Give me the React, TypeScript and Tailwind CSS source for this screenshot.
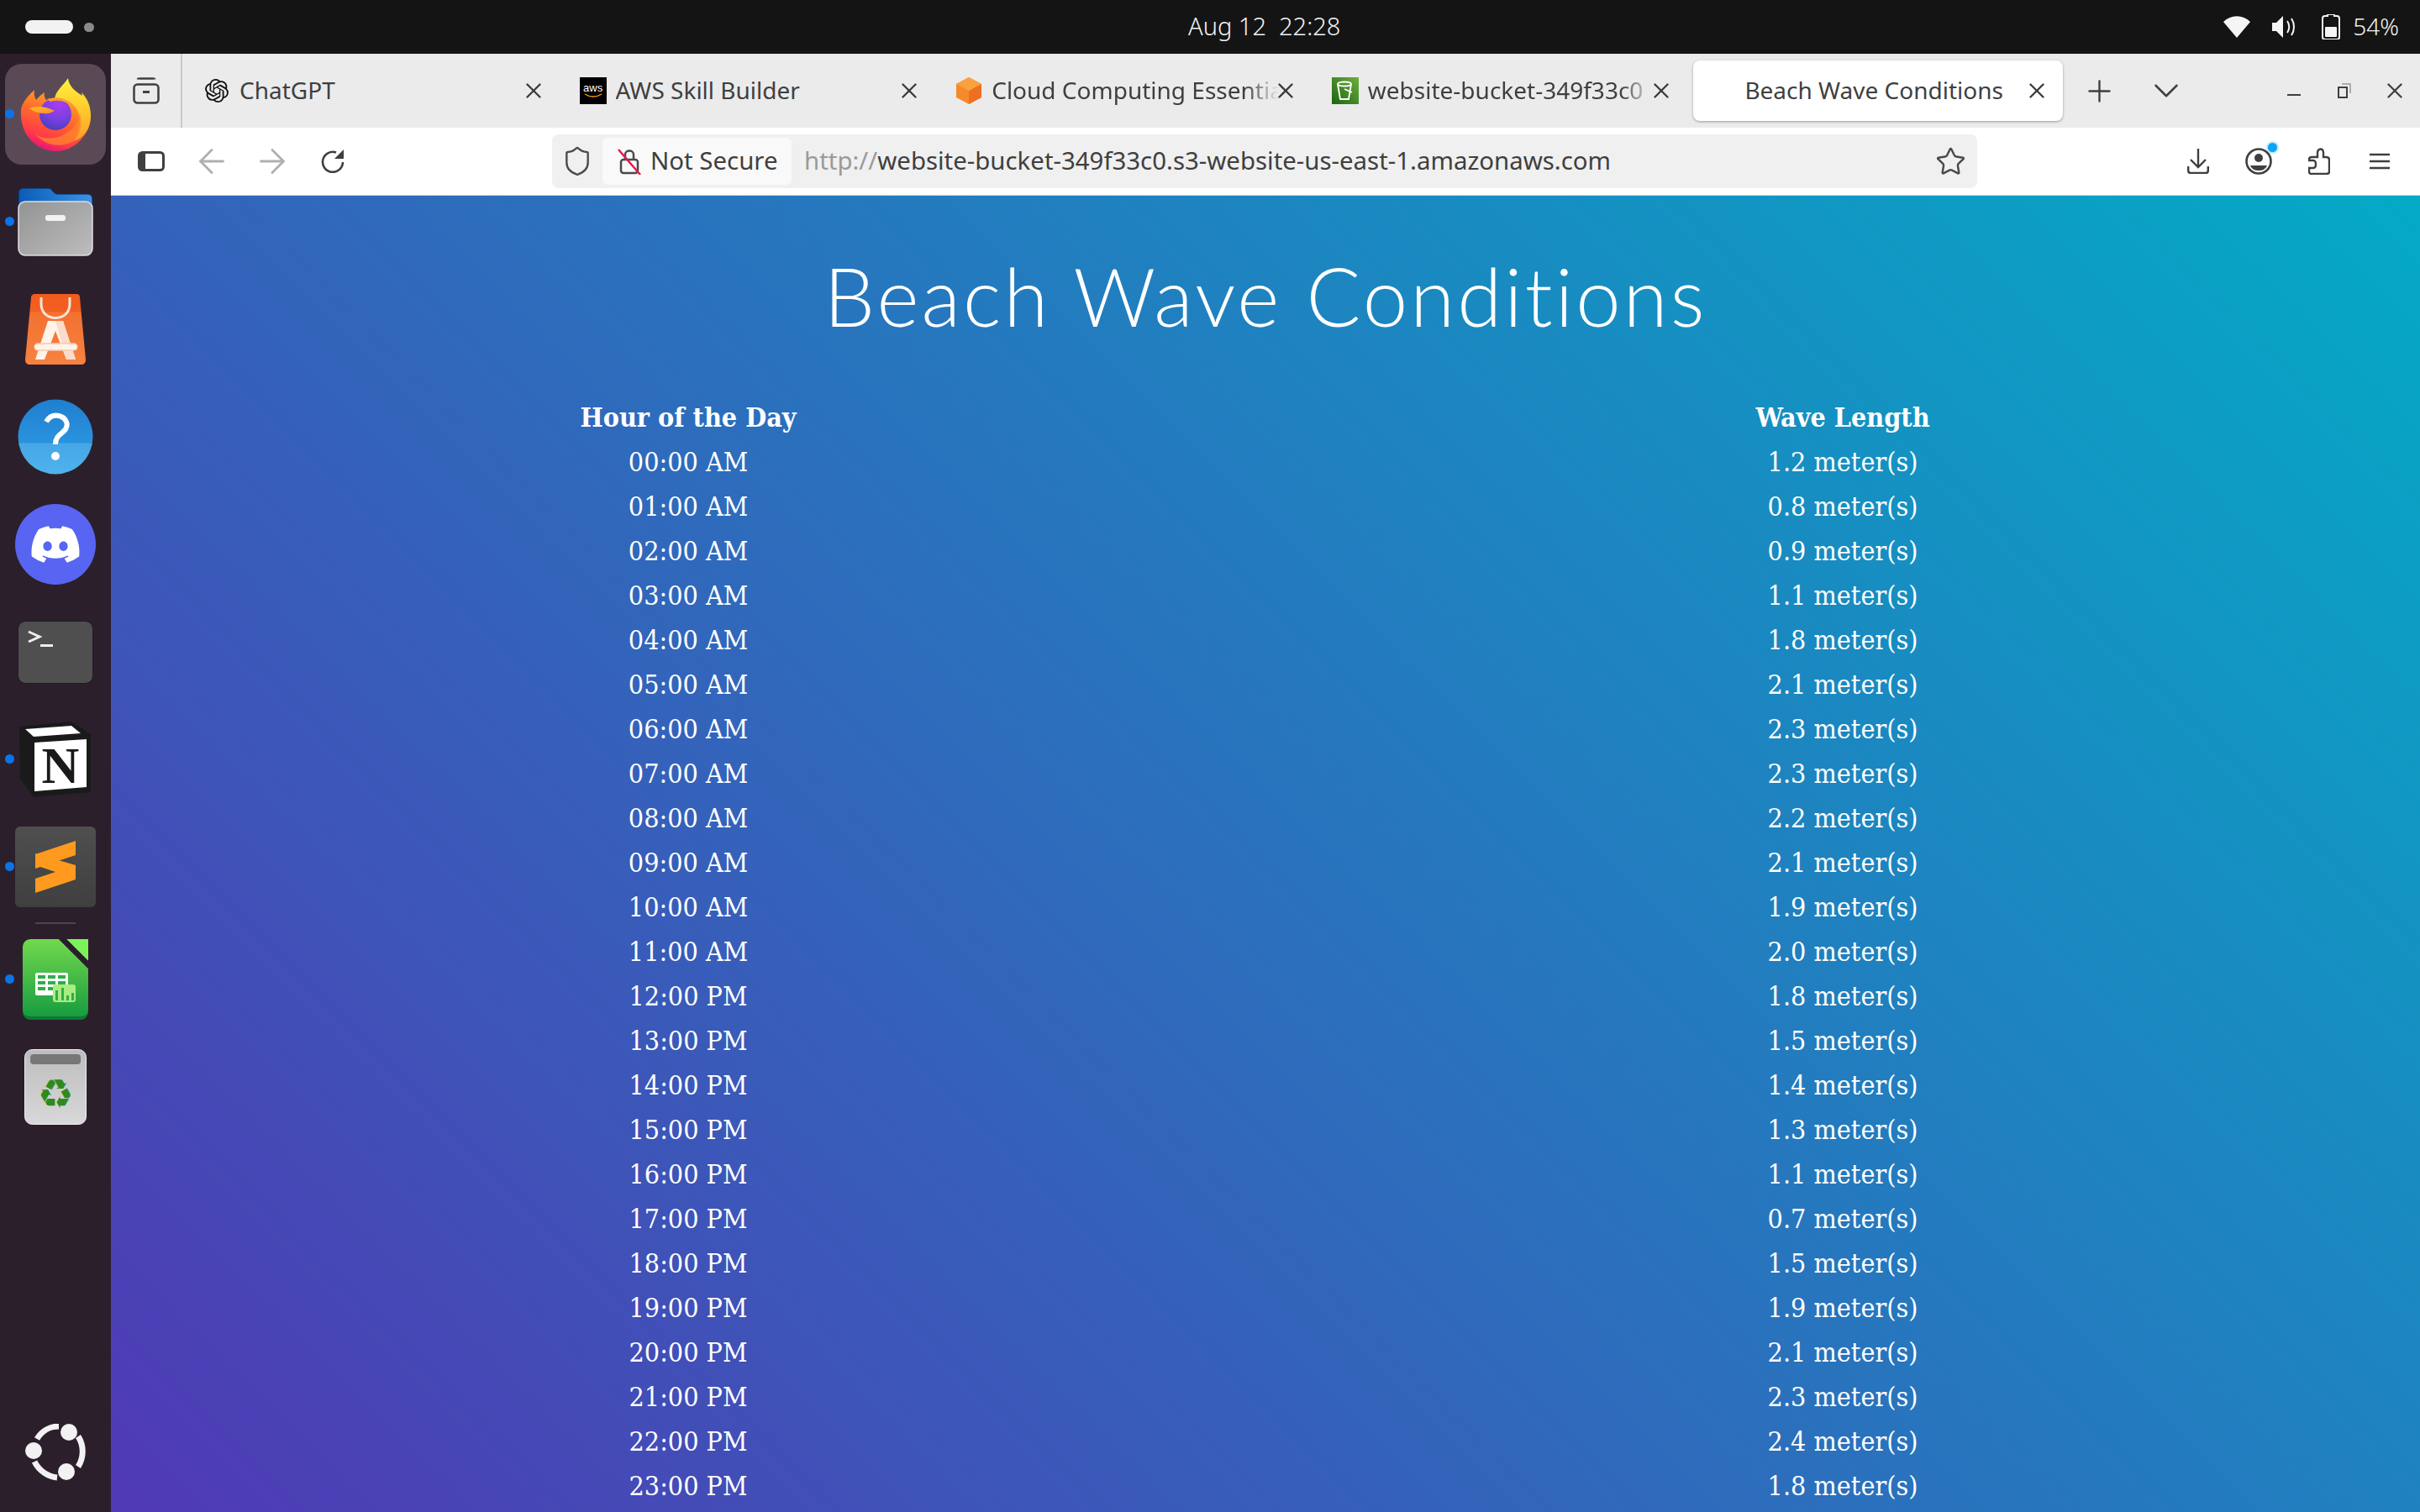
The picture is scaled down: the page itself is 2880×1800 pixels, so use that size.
import React from "react";
import { ArrowLeft, ArrowRight, Shield, Star, Plus, ChevronDown, X } from "lucide-react";
import { SiOpenai } from "react-icons/si";
import { FaDiscord } from "react-icons/fa";

const rows = [
  ["00:00 AM", "1.2"], ["01:00 AM", "0.8"], ["02:00 AM", "0.9"], ["03:00 AM", "1.1"],
  ["04:00 AM", "1.8"], ["05:00 AM", "2.1"], ["06:00 AM", "2.3"], ["07:00 AM", "2.3"],
  ["08:00 AM", "2.2"], ["09:00 AM", "2.1"], ["10:00 AM", "1.9"], ["11:00 AM", "2.0"],
  ["12:00 PM", "1.8"], ["13:00 PM", "1.5"], ["14:00 PM", "1.4"], ["15:00 PM", "1.3"],
  ["16:00 PM", "1.1"], ["17:00 PM", "0.7"], ["18:00 PM", "1.5"], ["19:00 PM", "1.9"],
  ["20:00 PM", "2.1"], ["21:00 PM", "2.3"], ["22:00 PM", "2.4"], ["23:00 PM", "1.8"],
];

function Firefox() {
  return (
    <svg width="84" height="87" viewBox="0 0 84 87">
      <defs>
        <linearGradient id="ffBody" x1="0.75" y1="0.05" x2="0.35" y2="1">
          <stop offset="0" stopColor="#ffb32b" />
          <stop offset="0.45" stopColor="#ff6a2a" />
          <stop offset="0.8" stopColor="#ff3a4a" />
          <stop offset="1" stopColor="#e3127a" />
        </linearGradient>
        <linearGradient id="ffFlame" x1="0.5" y1="0" x2="0.5" y2="1">
          <stop offset="0" stopColor="#fff03c" />
          <stop offset="0.6" stopColor="#ffc22c" />
          <stop offset="1" stopColor="#ff9a2a" />
        </linearGradient>
        <radialGradient id="ffGlobe" cx="0.6" cy="0.15" r="0.95">
          <stop offset="0" stopColor="#a83ef0" />
          <stop offset="0.55" stopColor="#7a3fe0" />
          <stop offset="1" stopColor="#3e3fb4" />
        </radialGradient>
        <linearGradient id="ffFox" x1="0" y1="0" x2="1" y2="1">
          <stop offset="0" stopColor="#ffbe2e" />
          <stop offset="1" stopColor="#ff8a28" />
        </linearGradient>
      </defs>
      <path d="M1 38C2 30 8 22 17 14C16 18 17 22 19 26C22 22 26 19 29 17C28 20 29 23 31 26C45 22 70 24 84 42C84 68 65 87 42 87C18 87 -1 66 1 38Z" fill="url(#ffBody)" />
      <path d="M41 24C43 14 51 9 57 0C58 10 66 16 74 21L73 17C80 24 84 33 84 45C84 60 77 70 64 75C72 62 74 46 66 35C60 27 50 23 41 24Z" fill="url(#ffFlame)" />
      <path d="M64 75C48 84 28 80 18 66C26 74 46 74 60 62C70 54 72 44 70 38C74 50 74 66 64 75Z" fill="#ff8a2a" opacity="0.7" />
      <circle cx="42" cy="43" r="19" fill="url(#ffGlobe)" />
      <path d="M11 36C18 33 30 33 41 39C37 41 33 43 29 42C22 42 16 40 11 36Z" fill="url(#ffFox)" />
      <path d="M32 25C44 21 58 25 64 35C56 28 46 25 36 28Z" fill="#ff9d2c" />
    </svg>
  );
}

function Folder() {
  return (
    <svg width="90" height="82" viewBox="0 0 90 82">
      <defs>
        <linearGradient id="fdBlue" x1="0" y1="0" x2="1" y2="0">
          <stop offset="0" stopColor="#0a5cb4" />
          <stop offset="1" stopColor="#3c93e6" />
        </linearGradient>
        <linearGradient id="fdGray" x1="0" y1="0" x2="1" y2="1">
          <stop offset="0" stopColor="#939393" />
          <stop offset="1" stopColor="#bdbdbd" />
        </linearGradient>
      </defs>
      <path d="M1 30V8C1 3 3 1 7 1H36C39 1 40 2 42 5C44 7 45 8 48 8H82C87 8 89 10 89 15V40H1Z" fill="url(#fdBlue)" stroke="#0b2a55" strokeWidth="1" />
      <rect x="1" y="17" width="88" height="64" rx="8" fill="url(#fdGray)" stroke="#dedede" strokeWidth="1.5" />
      <rect x="33" y="33" width="24" height="7" rx="3" fill="#f2f2f2" />
    </svg>
  );
}

function Store() {
  return (
    <svg width="72" height="84" viewBox="0 0 72 84">
      <defs>
        <linearGradient id="stBg" x1="0" y1="0" x2="0" y2="1">
          <stop offset="0" stopColor="#f25b1e" />
          <stop offset="0.25" stopColor="#f25f22" />
          <stop offset="0.26" stopColor="#f4702f" />
          <stop offset="1" stopColor="#f58341" />
        </linearGradient>
      </defs>
      <path d="M7 4C7 2 9 0 11 0H61C64 0 65 2 65 4L72 78C72 82 70 84 66 84H6C2 84 0 82 0 78Z" fill="url(#stBg)" />
      <path d="M19 4V12C19 34 53 34 53 12V4" fill="none" stroke="#f8e3d6" strokeWidth="3" />
      <path d="M27 32H45L60 78H49L36 44L23 78H12Z" fill="#fff3ea" />
      <path d="M36 32H45L60 78H49Z" fill="#fbdccb" />
      <rect x="11" y="59" width="51" height="8" rx="4" fill="#fff3ea" stroke="#f9c7ae" strokeWidth="1.5" />
    </svg>
  );
}

function Help() {
  return (
    <svg width="90" height="90" viewBox="0 0 90 90">
      <defs>
        <linearGradient id="hp" x1="0" y1="0" x2="0" y2="1">
          <stop offset="0" stopColor="#1f7fd0" />
          <stop offset="0.58" stopColor="#2a93de" />
          <stop offset="0.59" stopColor="#45a7e6" />
          <stop offset="1" stopColor="#4fb3ec" />
        </linearGradient>
      </defs>
      <circle cx="45" cy="45" r="44.5" fill="url(#hp)" />
      <path d="M34 27C38 20 44 19 49 20C57 22 61 29 57 36C53 42 45 43 45 54" fill="none" stroke="#fff" strokeWidth="6" />
      <circle cx="45" cy="68" r="5" fill="#fff" />
    </svg>
  );
}

function Discord() {
  return (
    <div className="w-[96px] h-[96px] rounded-full bg-[#5865f2] flex items-center justify-center">
      <FaDiscord size={62} color="#fff" />
    </div>
  );
}

function Terminal() {
  return (
    <svg width="90" height="75" viewBox="0 0 90 75">
      <rect x="0.5" y="0.5" width="89" height="74" rx="9" fill="#4f4f4f" stroke="#1d1d1d" strokeWidth="1" />
      <path d="M13 13L26 19L13 25" fill="none" stroke="#eeeeee" strokeWidth="3" />
      <rect x="27" y="28" width="15" height="3" fill="#eeeeee" />
    </svg>
  );
}

function Notion() {
  return (
    <svg width="86" height="90" viewBox="0 0 86 90">
      <path d="M0 6L62 0L85 15V84L17 90L1 68Z" fill="#1a1a1a" />
      <path d="M7 9L62 5L73 14L17 18Z" fill="#ffffff" />
      <path d="M18 25L80 21V78L18 83Z" fill="#ffffff" />
      <text x="49" y="73" textAnchor="middle" fontFamily="Liberation Serif, serif" fontWeight="700" fontSize="62" fill="#1a1a1a">N</text>
    </svg>
  );
}

function Sublime() {
  return (
    <div className="w-[96px] h-[96px] rounded-[6px] bg-gradient-to-b from-[#4f4f4f] to-[#3f3f3f] flex items-center justify-center">
      <svg width="48" height="62" viewBox="0 0 48 62">
        <path d="M48 0V17L0 33V16Z" fill="#ff9a1f" />
        <path d="M0 29L48 45V29L0 15Z" fill="#ff9a1f" />
        <path d="M0 45L48 29V46L0 62Z" fill="#ff9a1f" />
      </svg>
    </div>
  );
}

function Calc() {
  return (
    <svg width="78" height="96" viewBox="0 0 78 96">
      <defs>
        <linearGradient id="clc" x1="0" y1="0" x2="0" y2="1">
          <stop offset="0" stopColor="#72d94e" />
          <stop offset="1" stopColor="#149a3f" />
        </linearGradient>
      </defs>
      <path d="M10 0H43L78 35V84C78 91 74 96 68 96H10C4 96 0 91 0 84V10C0 4 4 0 10 0Z" fill="url(#clc)" />
      <path d="M0 84V86C0 92 4 96 10 96H68C74 96 78 92 78 86V84C78 90 74 92 68 92H10C4 92 0 90 0 84Z" fill="#0c7a33" />
      <path d="M52 0H78V26Z" fill="#7cf25a" />
      <path d="M43 0H52L78 26V35Z" fill="#2b1e2b" />
      <rect x="15" y="40" width="39" height="27" rx="2" fill="#fff" />
      <g fill="#2fae4a">
        <rect x="18" y="43" width="9" height="4" /><rect x="30" y="43" width="9" height="4" /><rect x="42" y="43" width="9" height="4" />
        <rect x="18" y="50" width="9" height="4" /><rect x="30" y="50" width="9" height="4" /><rect x="42" y="50" width="9" height="4" />
        <rect x="18" y="57" width="9" height="4" /><rect x="30" y="57" width="9" height="4" />
      </g>
      <rect x="36" y="54" width="27" height="21" rx="3" fill="#a8ec82" />
      <g fill="#2fae4a">
        <rect x="39" y="61" width="3" height="12" /><rect x="46" y="58" width="3" height="15" /><rect x="52" y="67" width="3" height="6" /><rect x="58" y="64" width="3" height="9" />
      </g>
    </svg>
  );
}

function Trash() {
  return (
    <svg width="74" height="90" viewBox="0 0 74 90">
      <defs>
        <linearGradient id="trs" x1="0" y1="0" x2="0" y2="1">
          <stop offset="0" stopColor="#bdbdbd" />
          <stop offset="1" stopColor="#d8d8d8" />
        </linearGradient>
      </defs>
      <rect x="0.5" y="0.5" width="73" height="89" rx="9" fill="url(#trs)" stroke="#ededed" strokeWidth="1" />
      <rect x="7" y="6" width="60" height="12" rx="4" fill="#777777" />
      <text x="37" y="70" textAnchor="middle" fontFamily="DejaVu Sans, sans-serif" fontSize="48" fill="#2f8a1e">♻</text>
    </svg>
  );
}

function UbuntuLogo() {
  return (
    <svg width="72" height="68" viewBox="0 0 72 68">
      <path d="M14 18C20 8 30 3 40 3" fill="none" stroke="#f2f2f2" strokeWidth="7" />
      <path d="M63 15C70 26 70 40 63 51" fill="none" stroke="#f2f2f2" strokeWidth="7" />
      <path d="M11 45C17 57 28 63 38 64" fill="none" stroke="#f2f2f2" strokeWidth="7" />
      <ellipse cx="52" cy="10" rx="10" ry="10" fill="#f2f2f2" />
      <ellipse cx="10" cy="32" rx="10" ry="10" fill="#f2f2f2" />
      <ellipse cx="49" cy="57" rx="10" ry="10" fill="#f2f2f2" />
    </svg>
  );
}

function DockSlot({ dot, children }: { dot?: boolean; children: React.ReactNode }) {
  return (
    <div className="relative h-[128px] w-full flex items-center justify-center shrink-0">
      {dot && <span className="absolute left-[6px] top-[58px] w-[11px] h-[11px] rounded-full bg-[#0a74e8]" />}
      {children}
    </div>
  );
}

function Tab({ icon, title, fade }: { icon: React.ReactNode; title: string; fade?: boolean }) {
  return (
    <div className="w-[447.6px] h-full flex items-center pl-[25px] pr-[22px] shrink-0">
      <div className="w-[32px] h-[32px] flex items-center justify-center shrink-0">{icon}</div>
      <div
        className={
          fade
            ? "ml-[11px] flex-1 min-w-0 -mt-[2px] overflow-hidden whitespace-nowrap leading-[44px] [mask-image:linear-gradient(to_right,black_88%,transparent)]"
            : "ml-[11px] flex-1 min-w-0 -mt-[2px] overflow-hidden whitespace-nowrap leading-[44px]"
        }
      >
        {title}
      </div>
      <X size={30} strokeWidth={1.9} className="shrink-0 text-[#3a3a3a] -mr-[7px] -ml-[7px]" />
    </div>
  );
}

function ToolBtn({ children }: { children: React.ReactNode }) {
  return <div className="w-[72px] h-full flex items-center justify-center shrink-0">{children}</div>;
}

export default function App() {
  return (
    <div className="w-[2880px] h-[1800px] overflow-hidden flex flex-col bg-[#141414] font-['Noto_Sans',sans-serif]">
      {/* top bar */}
      <div className="h-[64px] shrink-0 flex items-center bg-[#141414] text-[#f2f2f2] text-[29px]">
        <div className="w-[1414px] flex items-center pl-[30px] gap-[13px]">
          <span className="w-[57px] h-[16px] rounded-full bg-[#f2f2f2]" />
          <span className="w-[12px] h-[11px] rounded-full bg-[#8a8a8a]" />
        </div>
        <div className="whitespace-pre -mt-[2px] font-light">Aug 12  22:28</div>
        <div className="ml-auto flex items-center pr-[25px]">
          <svg width="32" height="26" viewBox="0 0 32 26" className="mr-[26px]">
            <path d="M16 26L0 7C9 -2 23 -2 32 7Z" fill="#f5f5f5" />
          </svg>
          <svg width="28" height="26" viewBox="0 0 28 26" className="mr-[31px]">
            <path d="M0 8H5L13 0V26L5 18H0Z" fill="#f5f5f5" />
            <path d="M18 6C21 10 21 16 18 20" fill="none" stroke="#f5f5f5" strokeWidth="2" />
            <path d="M23 3C27 9 27 17 23 23" fill="none" stroke="#f5f5f5" strokeWidth="2" />
          </svg>
          <svg width="22" height="30" viewBox="0 0 22 30" className="mr-[15px]">
            <path d="M7 0H15V2H18C20 2 21 3 21 5V27C21 29 20 30 18 30H4C2 30 1 29 1 27V5C1 3 2 2 4 2H7Z" fill="none" stroke="#f5f5f5" strokeWidth="2" />
            <rect x="4" y="15" width="14" height="12" rx="1" fill="#f5f5f5" />
          </svg>
          <span className="-mt-[2px] text-[28px] font-light">54%</span>
        </div>
      </div>

      <div className="flex-1 flex min-h-0">
        {/* dock */}
        <div className="w-[132px] shrink-0 bg-[#2c1f2c] flex flex-col pt-[8px]">
          <DockSlot dot>
            <div className="w-[120px] h-[120px] rounded-[20px] bg-[#5a4a55] flex items-center justify-center">
              <Firefox />
            </div>
          </DockSlot>
          <DockSlot dot><Folder /></DockSlot>
          <DockSlot><Store /></DockSlot>
          <DockSlot><Help /></DockSlot>
          <DockSlot><Discord /></DockSlot>
          <DockSlot><Terminal /></DockSlot>
          <DockSlot dot><Notion /></DockSlot>
          <DockSlot dot><Sublime /></DockSlot>
          <div className="h-[6px] shrink-0 flex items-center justify-center">
            <span className="w-[48px] h-[2px] bg-[#4d444c]" />
          </div>
          <DockSlot dot><Calc /></DockSlot>
          <DockSlot><Trash /></DockSlot>
          <div className="mt-auto h-[100px] flex items-center justify-center mb-[21px]">
            <UbuntuLogo />
          </div>
        </div>

        {/* browser */}
        <div className="flex-1 min-w-0 flex flex-col">
          <div className="h-[88px] shrink-0 bg-[#ebebeb] flex items-center text-[#3f3f3f] text-[28px]">
            <div className="w-[85px] h-full border-r-2 border-[#c8c8c8] flex items-center justify-center shrink-0">
              <svg width="32" height="32" viewBox="0 0 32 32" fill="none" stroke="#3f3f3f" strokeWidth="2.5">
                <rect x="1.5" y="8.5" width="29" height="22" rx="4" />
                <path d="M6 2.5C6 1.5 7 1.5 8 1.5H24C25 1.5 26 1.5 26 2.5" />
                <rect x="12" y="16" width="8" height="3" fill="#3f3f3f" stroke="none" />
              </svg>
            </div>
            <Tab title="ChatGPT" icon={<SiOpenai size={28} color="#111" />} />
            <Tab
              title="AWS Skill Builder"
              icon={
                <div className="w-[32px] h-[32px] bg-black flex flex-col items-center justify-center leading-none">
                  <span className="text-white text-[13px] leading-[12px] font-['Liberation_Sans',sans-serif]">aws</span>
                  <svg width="22" height="6" viewBox="0 0 22 6"><path d="M1 1C7 5 15 5 21 1" fill="none" stroke="#ff9900" strokeWidth="1.5" /></svg>
                </div>
              }
            />
            <Tab
              fade
              title="Cloud Computing Essentials"
              icon={
                <svg width="30" height="32" viewBox="0 0 30 32">
                  <path d="M15 0L30 8V24L15 32L0 24V8Z" fill="#f58a2c" />
                  <path d="M15 16L30 8V24L15 32Z" fill="#ee6f22" />
                  <path d="M15 0L30 8L15 16L0 8Z" fill="#f9a03f" />
                </svg>
              }
            />
            <Tab
              fade
              title="website-bucket-349f33c0"
              icon={
                <div className="w-[32px] h-[32px] bg-gradient-to-tr from-[#1b660f] to-[#6cae3e] flex items-center justify-center">
                  <svg width="20" height="24" viewBox="0 0 20 24" fill="none" stroke="#fff" strokeWidth="1.8">
                    <ellipse cx="9" cy="4" rx="8" ry="2.5" />
                    <path d="M1 4L4 22H14L17 4" />
                    <path d="M9 10L18 14" />
                  </svg>
                </div>
              }
            />
            <div className="ml-[8px] w-[440px] h-[72px] shrink-0 bg-white rounded-[8px] shadow-[0_1px_3px_rgba(0,0,0,0.35)] flex items-center pl-[61px] pr-[16px]">
              <div className="flex-1 -mt-[2px] whitespace-nowrap overflow-hidden leading-[44px]">Beach Wave Conditions</div>
              <X size={30} strokeWidth={1.9} className="shrink-0 text-[#3a3a3a]" />
            </div>
            <div className="ml-[3px] w-[80px] h-full flex items-center justify-center shrink-0">
              <Plus size={41} strokeWidth={1.4} />
            </div>
            <div className="w-[80px] h-full flex items-center justify-center shrink-0">
              <ChevronDown size={50} strokeWidth={1.2} />
            </div>
            <div className="ml-auto flex h-full">
              <div className="w-[60px] flex items-center justify-center">
                <span className="w-[16px] h-[2px] mt-[10px] bg-[#3f3f3f]" />
              </div>
              <div className="w-[60px] flex items-center justify-center">
                <svg width="16" height="18" viewBox="0 0 16 18" fill="none" stroke="#3f3f3f" strokeWidth="2">
                  <rect x="1" y="5" width="10" height="12" />
                  <path d="M5 1H15V12" stroke="#9a9a9a" strokeWidth="1.5" />
                </svg>
              </div>
              <div className="w-[60px] flex items-center justify-center">
                <X size={30} strokeWidth={1.9} />
              </div>
            </div>
          </div>

          <div className="h-[81px] shrink-0 bg-white border-b border-[#d4d4d4] flex items-center pl-[12px] pr-[12px] text-[#3f3f3f]">
            <ToolBtn>
              <svg width="32" height="24" viewBox="0 0 32 24">
                <rect x="1.5" y="1.5" width="29" height="21" rx="4" fill="none" stroke="#3f3f3f" strokeWidth="3" />
                <path d="M1.5 5C1.5 3 3 1.5 5 1.5H9V22.5H5C3 22.5 1.5 21 1.5 19Z" fill="#3f3f3f" />
              </svg>
            </ToolBtn>
            <ToolBtn><ArrowLeft size={46} strokeWidth={1.5} color="#b0b0b0" /></ToolBtn>
            <ToolBtn><ArrowRight size={46} strokeWidth={1.5} color="#b0b0b0" /></ToolBtn>
            <ToolBtn>
              <svg width="28" height="28" viewBox="0 0 28 28" fill="none">
                <path d="M26 15A12 12 0 1 1 18 3.5" stroke="#3f3f3f" strokeWidth="2.6" />
                <path d="M27 0V11H16Z" fill="#3f3f3f" />
              </svg>
            </ToolBtn>
            <div className="ml-[225px] w-[1696px] h-[64px] rounded-[8px] bg-[#f0f0f0] flex items-center shrink-0">
              <div className="w-[60px] flex items-center justify-center shrink-0">
                <Shield size={38} strokeWidth={1.5} color="#4a4a4a" />
              </div>
              <div className="w-[225px] h-[56px] rounded-[6px] bg-[#f9f9f9] flex items-center pl-[18px] shrink-0 text-[29.4px] text-[#3f3f3f]">
                <svg width="28" height="32" viewBox="0 0 28 32" fill="none" className="mr-[11px]">
                  <rect x="4" y="14" width="20" height="16" rx="3" stroke="#4a4a4a" strokeWidth="2.5" />
                  <path d="M9 14V8C9 2 19 2 19 8V14" stroke="#4a4a4a" strokeWidth="2.5" />
                  <path d="M1 2L27 32" stroke="#e8174a" strokeWidth="2.5" />
                </svg>
                <span className="-mt-[1px] whitespace-nowrap">Not Secure</span>
              </div>
              <div className="ml-[15px] flex-1 min-w-0 -mt-[1px] whitespace-nowrap text-[29.4px] text-[#3f3f3f]">
                <span className="text-[#9a9a9a]">http://</span>website-bucket-349f33c0.s3-website-us-east-1.amazonaws.com
              </div>
              <div className="w-[64px] flex items-center justify-center shrink-0">
                <Star size={37} strokeWidth={1.6} color="#4a4a4a" />
              </div>
            </div>
            <div className="ml-auto flex h-full">
              <ToolBtn>
                <svg width="26" height="30" viewBox="0 0 26 30" fill="none" stroke="#3f3f3f" strokeWidth="2.4">
                  <path d="M13 0V22M4 13L13 22L22 13" />
                  <path d="M1.2 21V26C1.2 28 2.2 29 4 29H22C24 29 24.8 28 24.8 26V21" />
                </svg>
              </ToolBtn>
              <ToolBtn>
                <div className="relative">
                  <svg width="32" height="32" viewBox="0 0 32 32">
                    <circle cx="16" cy="16" r="14.5" fill="none" stroke="#3f3f3f" strokeWidth="2.6" />
                    <circle cx="16" cy="12" r="5" fill="#3f3f3f" />
                    <path d="M6 21H26C24 26 20 27 16 27C12 27 8 26 6 21Z" fill="#3f3f3f" />
                  </svg>
                  <span className="absolute -top-[6px] -right-[6px] w-[11px] h-[11px] rounded-full bg-[#0aa5f5] shadow-[0_0_0_2px_rgba(10,165,245,0.25)]" />
                </div>
              </ToolBtn>
              <ToolBtn>
                <svg width="26" height="32" viewBox="0 0 26 32" fill="none" stroke="#3f3f3f" strokeWidth="2.4">
                  <path d="M11 11V6C11 0 18 0 18 6V11H21C24 11 25 12 25 14V28C25 30 24 31 22 31H4C2 31 1 30 1 28V24H6C10 24 10 15 6 15H1V14C1 12 2 11 4 11Z" />
                </svg>
              </ToolBtn>
              <ToolBtn>
                <svg width="24" height="20" viewBox="0 0 24 20" fill="none" stroke="#3f3f3f" strokeWidth="2.4">
                  <path d="M0 2H24M0 10H24M0 18H24" />
                </svg>
              </ToolBtn>
            </div>
          </div>

          {/* page */}
          <div className="flex-1 min-h-0 overflow-hidden text-white bg-[linear-gradient(45deg,#5039b4,#04aac6)]">
            <h1 className="pt-[54px] text-center text-[96px] leading-[130px] font-['Lato',sans-serif] font-light tracking-[3.1px]">
              Beach Wave Conditions
            </h1>
            <table className="mt-[53.5px] w-full table-fixed text-center font-['DejaVu_Serif_Condensed','DejaVu_Serif',serif] text-[32px]">
              <thead>
                <tr className="h-[53px]">
                  <th className="font-bold">Hour of the Day</th>
                  <th className="font-bold">Wave Length</th>
                </tr>
              </thead>
              <tbody>
                {rows.map(([h, v]) => (
                  <tr key={h} className="h-[53px]">
                    <td>{h}</td>
                    <td>{v} meter(s)</td>
                  </tr>
                ))}
              </tbody>
            </table>
          </div>
        </div>
      </div>
    </div>
  );
}
